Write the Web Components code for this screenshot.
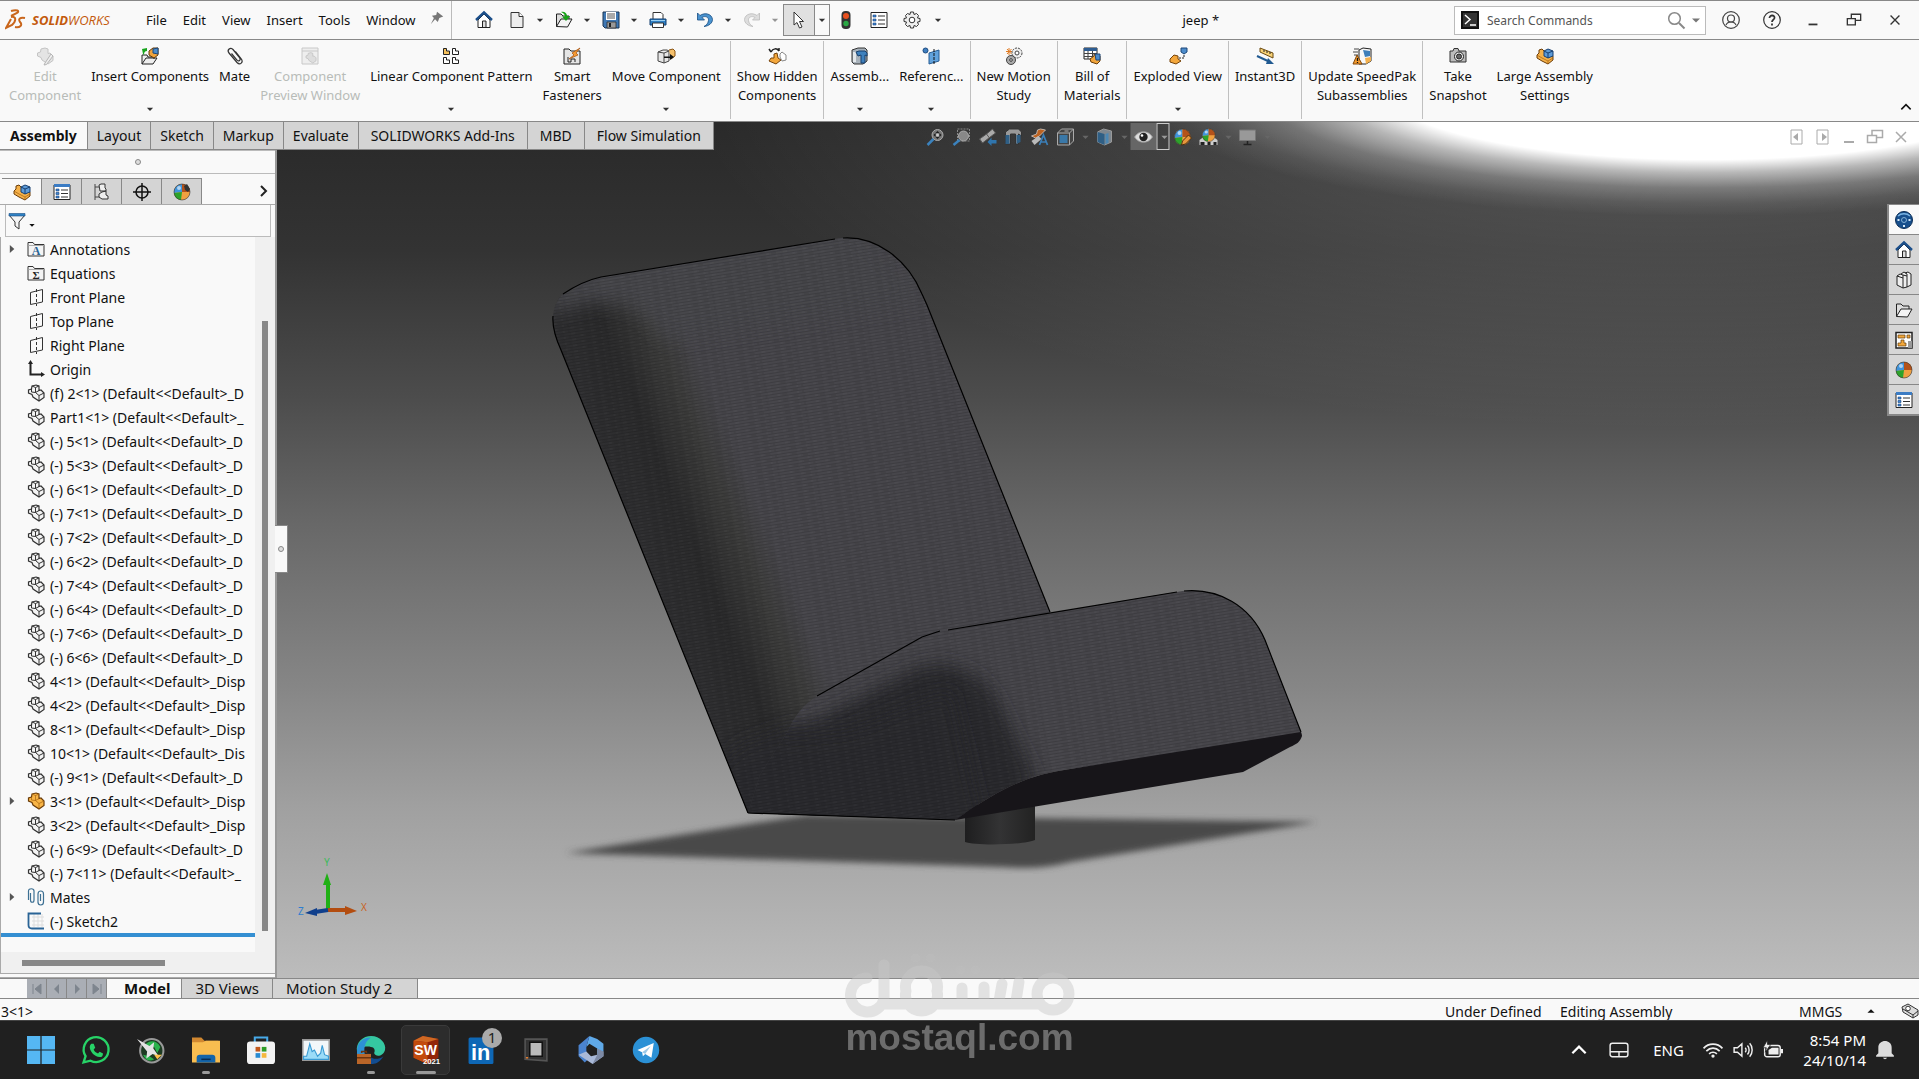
<!DOCTYPE html>
<html lang="en">
<head>
<meta charset="utf-8">
<title>jeep *</title>
<style>
  html, body { height: 100%; margin: 0; }
  body { font: 13px/19px "Noto Sans", "Open Sans", sans-serif; color: #111; overflow: hidden; }
</style>
</head>
<body>
<cad-app></cad-app>

<script>
const base = /*html*/ `
  <style>
    * { box-sizing: border-box; }
    button { margin: 0; padding: 0; border: 0; background: none; font: inherit; color: inherit; }
    :host { display: block; }
  </style>`;

// every component clones one template into an open shadow root
function define(name, markup, setup) {
    const template = document.createElement("template");
    template.innerHTML = base + markup;
    customElements.define(name, class extends HTMLElement {
        connectedCallback() {
            if (this.shadowRoot) return;
            this.attachShadow({ mode: "open" });
            this.shadowRoot.appendChild(template.content.cloneNode(true));
            if (setup) setup(this, this.shadowRoot);
        }
    });
}

const partPath = "M5 2L9 1L12 2V6.500L14 6L17 9V13.500L12 17L6 13L5 10.500L1.500 9V6L4.500 5Z";
const partLines = "M5 2L8.500 3.500L12 2M8.500 3.500V8.500L12 11.500L17 9M12 11.500V17M8.500 8.500L12 6.500M4.500 5V8L8.500 8.500";
const asm = `<path d="M1 8L3 6V3L6 2L9 5L17 9V13L12 17L6 14L1 11Z" fill="#f5b14a" stroke="#6b3c08"/><path d="M1 8L6 11L12 14L17 11M12 14V17" fill="none" stroke="#a3620f" stroke-width=".7"/><path d="M8 4L12 2L17 4V9L12 11L8 9Z" fill="#5d9bd8" stroke="#173f70"/><path d="M8 4L12 6L17 4M12 6V11" fill="none" stroke="#173f70"/>`;
const ball = `<circle cx="9" cy="9" r="8" fill="#f0a040"/><path d="M9 1A8 8 0 0 0 1 10L9 9Z" fill="#3f94dc"/><path d="M1 10A8 8 0 0 0 8 17L9 9Z" fill="#2da32b"/><path d="M9 1A8 8 0 0 1 17 9H9Z" fill="#b4521a"/><circle cx="6" cy="5" r="2" fill="#fff" opacity=".6"/><circle cx="9" cy="9" r="8" fill="none" stroke="#333" stroke-width=".6"/>`;
const list = `<path d="M1 2H17V16.500H1Z" fill="#fff" stroke="#222"/><path d="M1 1H17V4H1Z" fill="#3b7cc4"/><path d="M3 6H6V8H3ZM3 9.500H6V11.500H3ZM3 13H6V15H3Z" fill="#3f86d6" stroke="#17457c" stroke-width=".6"/><path d="M8 7H15M8 10.500H15M8 14H15" stroke="#333"/>`;
const restore = `<path d="M1.500 7.500H10.500V14.500H1.500ZM6 7V2.500H16.500V9.500H11" fill="none"/>`;
const house = `<path d="M3 9V16.500H15V9L9 3Z" fill="#fff" stroke="#222"/><path d="M7.500 16V10H11V16" fill="#ddd" stroke="#222"/><path d="M1 9L9 1.500L17 9" fill="none" stroke="#1c4f8a" stroke-width="2.400"/>`;
const folder = `<path d="M1.500 15.500V3H6L8 5H14V8" fill="#ddd" stroke="#222"/><path d="M1.500 15.500L6 8H17L12.500 16Z" fill="#f4f4f4" stroke="#222"/>`;
const treeFolder = `<path d="M1 16V2.500H6L7.500 4.500H17V16Z" fill="#f4f4f4" stroke="#333"/><path d="M1.500 5.500H17" stroke="#aaa"/>`;

const icons = {
    home: house,
    page: `<path d="M3 1.500H11L15 5.500V16.500H3Z" fill="#eee" stroke="#333"/><path d="M11 1.500V5.500H15" fill="#fff" stroke="#333"/>`,
    open: folder + `<path d="M6 1C9 0 12 2 12 5H15L11 10L7 5.500H10C10 3 8 2 6 1Z" fill="#17a317"/>`,
    save: `<path d="M1 1H17V17H3L1 15Z" fill="#3f78b4" stroke="#1b3553"/><path d="M4 1H14V9H4Z" fill="#fff"/><path d="M5 3H13M5 5H13M5 7H13" stroke="#555"/><path d="M5 11H14V17H5Z" fill="#999" stroke="#222" stroke-width=".7"/><path d="M7 12H9V16H7Z" fill="#222"/>`,
    print: `<path d="M4 8V1.500H12L14 3.500V8" fill="#fff" stroke="#333"/><path d="M1 8H17V14H1Z" fill="#2f7fc4" stroke="#123e6e"/><path d="M2 9.500H16" stroke="#9bd0f2"/><path d="M3.500 12H14.500V16.500H3.500Z" fill="#fff" stroke="#333"/>`,
    undo: `<path d="M1.500 2V9H8.500L6 6.500C9 4.500 13 6 12.500 9.500C12 12 11 14 8 15.500C13 15 16.500 12 16.500 8.500C16 3 9 1 4 4.500Z" fill="#4a93cf" stroke="#174c83" stroke-width=".8"/>`,
    redo: `<path d="M16.500 2V9H9.500L12 6.500C9 4.500 5 6 5.500 9.500C6 12 7 14 10 15.500C5 15 1.500 12 1.500 8.500C2 3 9 1 14 4.500Z" fill="#ddd" stroke="#bbb" stroke-width=".8"/>`,
    cursor: `<path d="M4 1V14L7 11.500L9.500 17L12 16L9.500 10.500H13.500Z" fill="#fff" stroke="#333"/>`,
    traffic: `<rect x="4.500" y="0" width="9" height="18" rx="4" fill="#333"/><circle cx="9" cy="5" r="3" fill="#e8501e"/><circle cx="9" cy="12.500" r="2.700" fill="#2aa844"/>`,
    list,
    options: `<path d="M1 1.500H17V16.500H1Z" fill="#fff" stroke="#222"/><path d="M3 4H6V6H3ZM3 8H6V10H3ZM3 12H6V14H3Z" fill="#3f86d6" stroke="#17457c" stroke-width=".6"/><path d="M8 5H15M8 9H15M8 13H15" stroke="#333"/>`,
    gear: `<path d="M7.500 1H10.500L11 3.500L13.500 2.500L15.500 4.500L14.500 7L17 7.500V10.500L14.500 11L15.500 13.500L13.500 15.500L11 14.500L10.500 17H7.500L7 14.500L4.500 15.500L2.500 13.500L3.500 11L1 10.500V7.500L3.500 7L2.500 4.500L4.500 2.500L7 3.500Z" fill="#eee" stroke="#333"/><circle cx="9" cy="9" r="2.800" fill="#fff" stroke="#333"/>`,
    pin: `<path d="M9 1L17 7L12 9L10 14L6.500 10.500L1 17L5 9L2.500 6L8 5Z" fill="#777"/>`,
    down: `<path d="M5 7.500H13L9 11.500Z" fill="currentColor"/>`,
    up: `<path d="M5 11H13L9 7Z" fill="currentColor"/>`,
    prompt: `<path d="M1 1H17V17H1Z" fill="#333" stroke="#111" stroke-width="2"/><path d="M4 4L9 8.500L4 13M9 14H15" fill="none" stroke="#fff" stroke-width="1.500"/>`,
    search: `<circle cx="7.500" cy="7.500" r="5.800" fill="none" stroke="#888" stroke-width="1.500"/><path d="M12 12L17.500 17.500" stroke="#888" stroke-width="2"/>`,
    user: `<g fill="none" stroke="#444" stroke-width="1.200"><circle cx="9" cy="9" r="8.300"/><circle cx="9" cy="7.500" r="3.500"/><path d="M4 14C5 11.500 7 11 9 11S13 11.500 14 14"/></g>`,
    help: `<circle cx="9" cy="9" r="8.300" fill="none" stroke="#333" stroke-width="1.200"/><path d="M6.500 7C6.500 3.500 12 3.800 11.500 7C11.300 8.500 9 9 9 11M9 12.500V14.500" fill="none" stroke="#333" stroke-width="1.800"/>`,
    min: `<path d="M4 14H14" stroke="currentColor" stroke-width="2"/>`,
    restore: `<g stroke="currentColor" stroke-width="1.500">${restore}</g>`,
    close: `<path d="M4 4L14 14M14 4L4 14" stroke="currentColor" stroke-width="1.500"/>`,
    paneleft: `<path d="M3 2H14V16H3Z" fill="none" stroke="currentColor"/><path d="M10 5V13L5 9Z" fill="currentColor"/>`,
    paneright: `<path d="M3 2H14V16H3Z" fill="none" stroke="currentColor"/><path d="M8 5V13L13 9Z" fill="currentColor"/>`,
    editpart: `<path d="${partPath}" fill="#e4e4e4" stroke="#c4c4c4"/><path d="M9 16L8 18L10.500 17.500L17 9L15 7Z" fill="#eee" stroke="#b5b5b5"/>`,
    insert: `<path d="M1 17V8H6L7 10H13V12M1 17L5 11H16L12 17Z" fill="#eee" stroke="#222"/><path d="M3 8C3 5 4 4 6 4V1L1 2L2 7" fill="#19a51f"/><path d="M8 4L12 1H17V8L13 11L8 8Z" fill="#efa33c" stroke="#603807"/><path d="M12 2L17 1V7L12 6Z" fill="#4c8ccb" stroke="#1c4779"/>`,
    clip: `<path d="M9.500 4.500L15 11.500C18 15.500 14 18.500 11 15.500L3 6C0.500 3 4.500 -0.500 7 2.500L13.500 10.500C15.500 13 12.500 15 11 13L5.500 6.500" fill="none" stroke="#333" stroke-width="1.200"/>`,
    preview: `<path d="M1 1H17V17H1Z" fill="#eee" stroke="#c8c8c8"/><path d="M1 4H17" stroke="#c8c8c8"/><g transform="translate(4 5) scale(.65)"><path d="${partPath}" fill="#ddd" stroke="#bbb"/></g>`,
    pattern: `<g fill="#fff" stroke="#222"><path d="M1.500 1.500H4.500V4H7.500V7.500H1.500Z" fill="#f5c05b"/><path d="M10.500 1.500H13.500V4H16.500V7.500H10.500ZM1.500 10.500H4.500V13H7.500V16.500H1.500ZM10.500 10.500H13.500V13H16.500V16.500H10.500Z"/></g>`,
    fastener: `<path d="M1 17V2H6L8 4H17V17Z" fill="#e5e5e5" stroke="#222"/><path d="M5 10V15H8V12H12V15" fill="none" stroke="#222"/><path d="M17 1L9 6L11 8L6 12L15 8L13 6Z" fill="#f59a32" stroke="#a04c08" stroke-width=".7"/>`,
    move: `<path d="M1 5L6 3H10L12 4V14L7 16L1 14ZM1 5L7 6L12 4M7 6V16" fill="#e6e6e6" stroke="#444"/><path d="M12 3L16 2L18 4V9L14 12" fill="#f6c06a" stroke="#8a5412"/><path d="M7 9.500H13V7L17 10L13 13V11H7Z" fill="#111"/>`,
    showhide: `<path d="M3 5C5 1 9 1 11 4M11 4V1M3 5L1 2" fill="none" stroke="#222" stroke-width="1.500"/><path d="M6 7L9 6L10 11L13 13L8 17L1 14L3 11H6Z" fill="#f3a73c" stroke="#74420a"/><path d="M12 7L14 5L18 8V13L14 14L12 10Z" fill="#fff" stroke="#888"/>`,
    assembfeat: `<path d="M1 3L7 1H14L16 3V14L12 17H3L1 15Z" fill="#a8b2bb" stroke="#333"/><path d="M2 5H5V15H2Z" fill="#e4e8eb"/><path d="M5 5L8 4H14L16 6V9L14 8V16H10V8L7 9Z" fill="#3f81bd" stroke="#173f6c"/>`,
    refgeo: `<circle cx="3.500" cy="3.500" r="2.500" fill="#3f7fc0" stroke="#1c4a80"/><path d="M7 6L17 3V14L7 17Z" fill="#61a2dc" stroke="#275d94"/><path d="M12 2V18" stroke="#111" stroke-dasharray="3 1"/>`,
    motion: `<path d="M4 1V8M1 4.500H7M2 2L6.500 7M6.500 2L2 7" stroke="#e07b22"/><circle cx="12" cy="6" r="5" fill="#eee" stroke="#444" stroke-dasharray="2 1"/><circle cx="12" cy="6" r="2" fill="#fff" stroke="#444"/><circle cx="6" cy="13" r="4.500" fill="#aaa" stroke="#444"/><circle cx="6" cy="13" r="1.300" fill="#fff" stroke="#333"/>`,
    bom: `<path d="M1 1H14V12H1Z" fill="#fff" stroke="#222"/><path d="M1 1H14V4H1Z" fill="#2e5d92"/><path d="M1 6.500H14M1 9.500H10M5 4V12M9.500 4V12" stroke="#444"/><path d="M7 12L11 9V7L17 9V14L14 17L8 15Z" fill="#f1a53c" stroke="#6a3d08"/><path d="M12 7H17V13H13Z" fill="#4c8ccb" stroke="#1c4779"/>`,
    explode: `<path d="M1 12L5 8L9 9V12L12 14L7 17L1 15Z" fill="#f3a73c" stroke="#74420a"/><path d="M12 1H18V5L15 7L12 5Z" fill="#4c8ccb" stroke="#1c4779"/><path d="M10 11H15V7" fill="none" stroke="#222" stroke-dasharray="2 1"/>`,
    instant: `<path d="M4 1L17 6V11L4 5Z" fill="#f8d276" stroke="#6b4a10"/><path d="M8 3V5M11 4V6M14 5V7" stroke="#222"/><path d="M1 9L14 15" stroke="#215a91" stroke-width="2"/><path d="M12 11L18 17L10 17Z" fill="#215a91"/>`,
    speedpak: `<path d="M6 3L10 1L18 2V14L13 17H6Z" fill="#f8f8f8" stroke="#222"/><path d="M10 3L17 4V9L12 10Z" fill="#3e7fba"/><path d="M12 11L18 10V14L13 17Z" fill="#f3b04e"/><path d="M1 2H6M0 5H5M1 8H5" stroke="#444"/><path d="M4 8L9 17H0Z" fill="#f39a2e" stroke="#824708"/><path d="M4.500 11V14M4.500 15V16" stroke="#111" stroke-width="1.300"/>`,
    camera: `<path d="M1 4H4L5 1.500H9L10 4H17V15H1Z" fill="#bbb" stroke="#333"/><circle cx="10" cy="9.500" r="4.500" fill="#eee" stroke="#222"/><circle cx="10" cy="9.500" r="2.500" fill="#666" stroke="#222"/>`,
    asm,
    propmgr: list,
    config: `<path d="M2 1V17M2 4H6M2 14H7" stroke="#444" fill="none"/><path d="M6 2L8 1H12V5L13 6V8H7ZM6 11L9 9L13 8V12L15 13V16H9L6 14Z" fill="#eee" stroke="#333"/>`,
    target: `<circle cx="9" cy="9" r="6" fill="none" stroke="#111" stroke-width="1.500"/><path d="M9 0V18M0 9H18" stroke="#111" stroke-width="1.500"/>`,
    ball,
    display: ball + `<path d="M11 3L14 1L17 6L15 9L12 7Z" fill="#333"/>`,
    next: `<path d="M6 4L11 9L6 14" fill="none" stroke="#222" stroke-width="2"/>`,
    funnel: `<path d="M1 3H17L11 10V17L7 14V10Z" fill="#f4f4f4" stroke="#333"/><path d="M1 1.500H17V4H1Z" fill="#2f82c4" stroke="#174c83" stroke-width=".6"/>`,
    annot: treeFolder + `<text x="9" y="15" text-anchor="middle" font-family="Liberation Serif" font-weight="bold" font-size="12" fill="#2a6496">A</text>`,
    equat: treeFolder + `<text x="9" y="15" text-anchor="middle" font-family="Liberation Serif" font-weight="bold" font-size="11" fill="#222">Σ</text>`,
    plane: `<path d="M3.500 4.500L15.500 1.500V14L3.500 16.500Z" fill="#fafafa" stroke="#333"/><path d="M9.500 1V18" stroke="#333" stroke-dasharray="3 2"/>`,
    origin: `<path d="M3.500 3V14.500H15" fill="none" stroke="#222" stroke-width="2"/><path d="M1 4L3.500 0L6 4ZM14 12L18 14.500L14 17Z" fill="#222"/>`,
    part: `<path d="${partPath}" fill="#f4f4f4" stroke="#333" stroke-width="1.200"/><path d="${partLines}" fill="none" stroke="#333"/>`,
    hotpart: `<path d="${partPath}" fill="#f9b546" stroke="#6b3c08" stroke-width="1.200"/><path d="${partLines}" fill="none" stroke="#a3620f" stroke-width=".7"/>`,
    mates: `<g fill="none" stroke="#3d7093" stroke-width="1.200"><path d="M1.500 12V3C1.500 0 7 0 7 3V12C7 15 3.500 15 3.500 12V5"/><path d="M11 15V6C11 2 16.500 2 16.500 6V14C16.500 18 11 18 11 14M13.500 6V13"/></g>`,
    sketch: `<path d="M5 5H17M5 9H17M5 13H17M7 2V15M11 2V15M15 2V15" stroke="#ddd"/><path d="M14 1.500H1.500V13C1.500 15.500 3 16.500 5 16.500H17" fill="none" stroke="#2a6496" stroke-width="1.800"/>`,
    zoomfit: `<circle cx="11" cy="7" r="5.500" fill="#777" stroke="#aaa"/><path d="M11 3L13 5H9ZM11 11L9 9H13ZM7 7L9 5V9ZM15 7L13 9V5Z" fill="#1c1c1c"/><circle cx="11" cy="7" r="1.500" fill="#ccc"/><path d="M7 11L1 17" stroke="#3b82bd" stroke-width="2.500"/>`,
    zoomarea: `<path d="M5 1H17V13H5Z" fill="none" stroke="#888" stroke-dasharray="2 1"/><circle cx="11" cy="8" r="5" fill="#888" stroke="#aaa"/><path d="M7 12L1 17" stroke="#3b82bd" stroke-width="2.500"/>`,
    prev: `<path d="M1 11L8 6L14 1L17 5L13 8L4 15Z" fill="#aaa" stroke="#555"/><path d="M1 11L4 15M8 6L11 10" stroke="#555"/><path d="M9 14L13 9.500V12H18V15.500H13V18Z" fill="#2f75ad"/>`,
    section: `<path d="M1 4L5 1H14L17 4V8L14 6V16H11V6H6V16H1Z" fill="#999" stroke="#333"/><path d="M1 7H5V16H1ZM12 7H16V14L12 16Z" fill="#2f5f85"/>`,
    dynamic: `<path d="M1 8L6 6L7 2L10 1L15 2L9 8L5 10Z" fill="#bd6322" stroke="#ddd" stroke-width=".7"/><path d="M1 13L8 8L11 11L4 17Z" fill="#bbb"/><path d="M9 17L13 7L17 17M10.500 14H15.500" fill="none" stroke="#3b7fb8" stroke-width="1.700"/>`,
    cube: `<path d="M1 5L5 1H17V13L13 17H1Z" fill="#444" stroke="#aaa"/><path d="M3 7H11V15H3Z" fill="#3a78a8"/><path d="M1 5H13V17M13 5L17 1M8 3H12" fill="none" stroke="#aaa"/>`,
    shade: `<path d="M2 4L8 1L16 3V14L9 17L2 14Z" fill="#7d868e" stroke="#999"/><path d="M2 4L9 6V17L2 14Z" fill="#2f5f85"/><path d="M10 6L13 5V15L10 16Z" fill="#4b87b4"/>`,
    eye: `<path d="M0 9C4 2 14 2 18 9C14 16 4 16 0 9Z" fill="#ddd" stroke="#999"/><circle cx="9" cy="9" r="4.200" fill="#222"/><circle cx="7.500" cy="7.500" r="1.300" fill="#fff"/>`,
    paint: ball + `<path d="M8 17L9 13L15 7L18 10L12 16Z" fill="#e6963d" stroke="#4d3010"/>`,
    scene: `<path d="M0 12L4 9H14L18 12V17H0Z" fill="#ccc"/><path d="M1 14H5V17H1ZM8 14H11V17H8ZM14 14H17V17H14Z" fill="#222"/><g transform="translate(2 0) scale(.8)">${ball}</g>`,
    monitor: `<path d="M1 2H17V12.500H1Z" fill="#999" stroke="#777"/><path d="M9 13V16M5 16.500H13" stroke="#222" stroke-width="1.500"/>`,
    globe: `<circle cx="9" cy="9" r="8.500" fill="#174f8d" stroke="#0c2d55"/><path d="M3 5C6 2 12 2 15 5" fill="none" stroke="#7ab4e4" stroke-width="1.500"/><circle cx="9" cy="9" r="2.500" fill="none" stroke="#9cc8ea" stroke-width=".8"/><path d="M2.500 9H4.500M13.500 9H15.500M8 15H10" stroke="#d6e8f6" stroke-width="2"/>`,
    books: `<path d="M2 5L5 3L8 4V17L2 14ZM6 3L9 1L12 3V16L8 17M10 2L13 1L16 3V14L12 16" fill="#eee" stroke="#222"/><path d="M2 5L8 7M8 4L12 5" stroke="#222"/>`,
    folder,
    palette: `<path d="M1 1.500H17V17H1Z" fill="#fff" stroke="#222" stroke-width="1.500"/><path d="M3 4H10V7H3ZM12 4H15V7H12ZM6 9H9V12H11V15H3V12H6Z" fill="#f2a73b" stroke="#623d0b" stroke-width=".7"/><path d="M13 10H17V17H13Z" fill="#999"/>`,
    tag: `<path d="M1 5L7 2L17 8V13L12 16L2 10Z" fill="#ddd" stroke="#333"/><circle cx="7" cy="6.500" r="2.300" fill="#fff" stroke="#333"/><path d="M2 7L12 13L17 9M12 13V16" fill="none" stroke="#333"/>`,
    win: `<path d="M0 0H8.600V8.600H0ZM9.400 0H18V8.600H9.400ZM0 9.400H8.600V18H0ZM9.400 9.400H18V18H9.400Z" fill="#55b7f3"/>`,
    whatsapp: `<path d="M1 17L2.300 13A8 8 0 1 1 5.500 15.900Z" fill="none" stroke="#27d367" stroke-width="1.500"/><path d="M6 5L7.500 5L8.500 7.500L7.500 8.700C8 10 9 10.800 10.300 11.300L11.300 10.200L13.500 11.200C13.500 13 12.500 13.700 11.300 13.500C8 13 5.500 10.500 5 7.500C5 6.300 5.300 5.500 6 5Z" fill="#27d367"/>`,
    rocket: `<circle cx="9.500" cy="9.500" r="7.500" fill="#1d3b22" stroke="#999" stroke-width="1.300"/><path d="M5 6C8 2 13 3 15 7L13 11L11 7ZM4 12L8 13L11 15C8 17 5 15 4 12Z" fill="#2bb24c"/><path d="M0 2L8 6.500L11 4L10.500 8L14 13L10 11.500L6 14.500L6.500 10Z" fill="#e4e4e4"/><path d="M11 12L16 12L13 15Z" fill="#ffc04a"/>`,
    files: `<path d="M0 1H6L8 3H17V8H0Z" fill="#d18830"/><path d="M0 4H7L9 3H18V17H0Z" fill="#f8bd50"/><path d="M3 17V14Q3 12 5 12H13Q15 12 15 14V17Z" fill="#1465aa"/><path d="M6 15H12" stroke="#082d55"/>`,
    store: `<path d="M5 4V1H13V4" fill="none" stroke="#47a9e8" stroke-width="1.300"/><rect y="3.500" width="18" height="14.500" rx="2" fill="#f3f3f3"/><path d="M5.500 7H8.500V10H5.500Z" fill="#c3581b"/><path d="M9.500 7H12.500V10H9.500Z" fill="#2d9c28"/><path d="M5.500 11H8.500V14H5.500Z" fill="#288bd2"/><path d="M9.500 11H12.500V14H9.500Z" fill="#f5b73d"/>`,
    perf: `<path d="M.5 2.500H17.500V15.500H.5Z" fill="#f2f7fa" stroke="#999"/><path d="M1 15V13L3 13L5 5L6.500 10L8 9L10 13L12 11L13 6L14.500 12L17 13V15Z" fill="#9cdcf8" stroke="#3a9bd4" stroke-width=".7"/>`,
    edge: `<path d="M0 10C-1 4 4 0 9 0C15 0 19 5 18 9C17 13 12 14 11 11C12 9 11 7 9 7C5 6 1 8 0 10Z" fill="#35c7a1"/><path d="M0 10C0 4 4 1 9 1C6 3 4 6 5 12L0 12Z" fill="#2d91d5"/><path d="M7 10C7 15 13 16 17 13C14 18 10 19 7 17Z" fill="#124c90"/><path d="M0 11.500H9V18H0Z" fill="#b96528"/><path d="M0 14H9M3 11V10H6V11" stroke="#6c330d" fill="none"/>`,
    sw: `<path d="M1 3L7 0L17 2V14L10 18L1 14Z" fill="#932608"/><path d="M1 3L7 0L17 2L10 4Z" fill="#cf6823"/><path d="M1 3L10 4V18L1 14Z" fill="#c34b0c"/><g fill="#fff" font-family="Liberation Sans" font-weight="bold"><text x="1.500" y="12.500" font-size="9">SW</text><text x="7" y="18" font-size="5">2021</text></g>`,
    linkedin: `<rect x="1" y="1" width="16" height="17" rx="1" fill="#0e67b5"/><text x="2.500" y="15.500" font-family="Liberation Sans" font-weight="bold" font-size="14" fill="#fff">in</text>`,
    chip: `<path d="M2 2L16 2V16L2 15Z" fill="#333" stroke="#555"/><path d="M5 4H13V13H5Z" fill="#bbb" stroke="#111"/><path d="M2.500 14H4" stroke="#e07c30"/>`,
    hexring: `<path d="M8 0L13 2L17 5V10L13 12V8L8 5L6 7Z" fill="#5fa9e8"/><path d="M8 0L6 7V12L9 13L5 17L1 13V6Z" fill="#4a83cf"/><path d="M1 12L6 10L9 13L13 12L17 10V13L10 18Z" fill="#a9b9d8"/><path d="M17 10L13 8V12L10 18L17 13Z" fill="#7d8aa5"/>`,
    telegram: `<circle cx="9" cy="9" r="8.500" fill="#2b91d6"/><path d="M3.500 9L14 4.500L12.500 14L8.500 11.500L7 13L6.500 10.500Z" fill="#fff"/><path d="M6.500 10.500L12 6.500L8.500 11.500Z" fill="#9bc9e8"/>`,
    chevup: `<path d="M3 12L9 6L15 12" fill="none" stroke="currentColor" stroke-width="2"/>`,
    touchpad: `<rect x="1" y="3" width="16" height="12" rx="2" fill="none" stroke="#eee" stroke-width="1.300"/><path d="M1 10.500H17M9 10.500V15" stroke="#eee" stroke-width="1.300"/>`,
    wifi: `<g fill="none" stroke="#eee" stroke-width="1.500"><path d="M.5 7.500C5 2.500 13 2.500 17.500 7.500M3 10C6.500 6.500 11.500 6.500 15 10M5.500 12.500C7.500 10.500 10.500 10.500 12.500 12.500"/></g><circle cx="9" cy="14.500" r="1.500" fill="#eee"/>`,
    volume: `<g fill="none" stroke="#eee" stroke-width="1.300"><path d="M1 7H4L8 3.500V14.500L4 11H1ZM11 7C12 8 12 10 11 11M13 5C15 7 15 11 13 13M15 3C18 6 18 12 15 15"/></g>`,
    battery: `<rect x="1.500" y="5" width="14" height="10" rx="2" fill="none" stroke="#eee" stroke-width="1.300"/><path d="M5 13V9L8 7H14V13ZM16 8H18V12H16Z" fill="#eee"/><path d="M4 0L0 7H3L2 11L7 4H4Z" fill="#eee" stroke="#202020" stroke-width=".7"/>`,
    bell: `<path d="M3 12V7C3 -1 15 -1 15 7V12L17 14V15H1V14ZM7 16H11Q9 18.500 7 16Z" fill="#ddd"/>`
};

define("cad-icon", /*html*/ `
  <style>
    :host { display: inline-flex; flex: none; width: 18px; height: 18px; }
    svg { width: 100%; height: 100%; overflow: visible; }
  </style>
  <svg viewBox="0 0 18 18" aria-hidden="true"></svg>`,
(host, root) => {
    root.querySelector("svg").innerHTML = icons[host.getAttribute("name")] || "";
});

define("title-bar", /*html*/ `
  <style>
    :host { display: flex; align-items: center; height: 40px; background: #f9f9f9; border-top: 1px solid #888; border-bottom: 1px solid #888; }
    .brand { display: flex; align-items: center; gap: 6px; width: 138px; padding-left: 5px; color: #c35a0c; font-style: italic; white-space: nowrap; }
    .brand svg { width: 21px; height: 24px; }
    .brand span { font-family: "Open Sans", sans-serif; }
    nav, .quick, .window { display: flex; align-items: center; height: 100%; }
    nav button { padding: 0 8px; }
    .pin { width: 28px; height: 100%; padding: 0; border-right: 1px solid #bbb; margin-right: 18px; }
    .pin cad-icon { width: 14px; height: 14px; }
    .quick > button { width: 28px; height: 30px; display: grid; place-items: center; }
    .quick > .arrow { width: 19px; color: #333; }
    .quick > .home { margin-right: 5px; }
    .quick > .select { width: 32px; height: 32px; margin-left: -2px; background: #e0e0e0; border: 1px solid #888; }
    .quick > .select + .arrow { width: 15px; height: 32px; border: 1px solid #888; border-left: 0; }
    .quick > .wide { width: 33px; }
    .off { opacity: .5; }
    .arrow cad-icon { width: 14px; height: 14px; }
    h1 { flex: 1; margin: 0; text-align: center; font: inherit; }
    form { display: flex; align-items: center; gap: 8px; width: 252px; height: 29px; margin-right: 4px; padding: 0 0 0 6px; background: #fff; border: 1px solid #bbb; }
    input { flex: 1; min-width: 0; border: 0; padding: 0; outline: 0; background: none; font: inherit; font-size: 12px; }
    input::placeholder { color: #555; opacity: 1; }
    form cad-icon:last-child { margin-left: -6px; color: #777; }
    .window { padding-right: 4px; color: #333; }
    .window button { width: 41px; height: 30px; display: grid; place-items: center; }
    .window .small cad-icon { width: 16px; height: 16px; }
  </style>
  <div class="brand">
    <svg viewBox="0 0 21 24" fill="none" stroke="#c9661c" stroke-width="2"><path d="M6 3C12 1 15 3 12 5L6 8M6 9C12 8 11 13 7 17L1 20L6 11M20 10C15 9 13 11 15 14C18 17 15 20 10 19"/></svg>
    <span><b>SOLID</b>WORKS</span>
  </div>
  <nav>
    <button>File</button><button>Edit</button><button>View</button><button>Insert</button><button>Tools</button><button>Window</button>
    <button class="pin" aria-label="Pin"><cad-icon name="pin"></cad-icon></button>
  </nav>
  <div class="quick"></div>
  <h1>jeep *</h1>
  <form>
    <cad-icon name="prompt"></cad-icon>
    <input type="search" placeholder="Search Commands" aria-label="Search Commands">
    <cad-icon name="search"></cad-icon>
    <cad-icon name="down"></cad-icon>
  </form>
  <div class="window">
    <button aria-label="Account"><cad-icon name="user"></cad-icon></button>
    <button aria-label="Help"><cad-icon name="help"></cad-icon></button>
    <button class="small" aria-label="Minimize"><cad-icon name="min"></cad-icon></button>
    <button class="small" aria-label="Restore"><cad-icon name="restore"></cad-icon></button>
    <button class="small" aria-label="Close"><cad-icon name="close"></cad-icon></button>
  </div>`,
(host, root) => {
    const items = [["home", "home"], ["page"], ["down", "arrow"], ["open"], ["down", "arrow"], ["save"], ["down", "arrow"],
        ["print"], ["down", "arrow"], ["undo"], ["down", "arrow"], ["redo"], ["down", "arrow off"],
        ["cursor", "select"], ["down", "arrow"], ["traffic", "wide"], ["options", "wide"], ["gear", "wide"], ["down", "arrow"]];
    root.querySelector(".quick").innerHTML = items.map(([icon, cls = ""]) =>
        `<button class="${cls}" aria-label="${icon}"><cad-icon name="${icon}"></cad-icon></button>`).join("");
});

define("ribbon-button", /*html*/ `
  <style>
    :host { display: block; }
    :host([disabled]) { color: #b8bcb8; }
    button { display: flex; flex-direction: column; align-items: center; height: 76px; padding: 6px 5px 0; white-space: nowrap; text-align: center; }
    .label { flex: 1; margin-top: 2px; }
    .arrow { width: 14px; height: 14px; margin-bottom: 1px; color: #333; }
  </style>
  <button><cad-icon class="pic"></cad-icon><span class="label"><slot></slot></span></button>`,
(host, root) => {
    const button = root.querySelector("button");
    const pic = document.createElement("cad-icon");
    pic.setAttribute("name", host.getAttribute("icon"));
    root.querySelector(".pic").replaceWith(pic);
    button.disabled = host.hasAttribute("disabled");
    if (host.hasAttribute("menu")) {
        button.insertAdjacentHTML("beforeend", `<cad-icon class="arrow" name="down"></cad-icon>`);
    }
});

define("command-ribbon", /*html*/ `
  <style>
    :host { display: flex; height: 82px; background: #f9f9f9; border-bottom: 1px solid #888; }
    div { display: flex; height: 78px; margin-top: 1px; padding: 0 1px; border-right: 1px solid #c0c0c0; }
    div:first-of-type { padding: 0 4px; }
    div:last-of-type { border: 0; }
    .fold { align-self: flex-end; margin: 0 6px 2px auto; }
    .fold cad-icon { width: 14px; height: 14px; }
  </style>
  <div>
    <ribbon-button icon="editpart" disabled>Edit<br>Component</ribbon-button>
    <ribbon-button icon="insert" menu>Insert Components</ribbon-button>
    <ribbon-button icon="clip">Mate</ribbon-button>
    <ribbon-button icon="preview" disabled>Component<br>Preview Window</ribbon-button>
    <ribbon-button icon="pattern" menu>Linear Component Pattern</ribbon-button>
    <ribbon-button icon="fastener">Smart<br>Fasteners</ribbon-button>
    <ribbon-button icon="move" menu>Move Component</ribbon-button>
  </div>
  <div><ribbon-button icon="showhide">Show Hidden<br>Components</ribbon-button></div>
  <div>
    <ribbon-button icon="assembfeat" menu>Assemb...</ribbon-button>
    <ribbon-button icon="refgeo" menu>Referenc...</ribbon-button>
  </div>
  <div><ribbon-button icon="motion">New Motion<br>Study</ribbon-button></div>
  <div><ribbon-button icon="bom">Bill of<br>Materials</ribbon-button></div>
  <div><ribbon-button icon="explode" menu>Exploded View</ribbon-button></div>
  <div><ribbon-button icon="instant">Instant3D</ribbon-button></div>
  <div><ribbon-button icon="speedpak">Update SpeedPak<br>Subassemblies</ribbon-button></div>
  <div>
    <ribbon-button icon="camera">Take<br>Snapshot</ribbon-button>
    <ribbon-button icon="asm">Large Assembly<br>Settings</ribbon-button>
  </div>
  <button class="fold" aria-label="Collapse"><cad-icon name="chevup"></cad-icon></button>`);

define("command-tabs", /*html*/ `
  <style>
    :host { display: flex; width: max-content; height: 28px; font-size: 14px; background: #f9f9f9; border-bottom: 1px solid #888; }
    button { height: 27px; padding: 0 9px; background: #d4d4d4; border-right: 1px solid #888; }
    button:first-of-type { padding: 0 10px; font-weight: bold; background: #f9f9f9; }
    .wide { padding: 0 12px; }
  </style>
  <button>Assembly</button><button>Layout</button><button>Sketch</button><button>Markup</button><button>Evaluate</button><button class="wide">SOLIDWORKS Add-Ins</button><button class="wide">MBD</button><button class="wide">Flow Simulation</button>`);

define("tree-row", /*html*/ `
  <style>
    :host { display: flex; align-items: center; height: 24px; padding-left: 7px; font-size: 14px; white-space: nowrap; }
    .twist { width: 9px; height: 8px; margin-right: 10px; }
    :host([open]) .twist { background: #555; clip-path: polygon(20% 0, 70% 50%, 20% 100%); }
    slot[name] { display: flex; margin-right: 5px; }
  </style>
  <span class="twist"></span><slot name="icon"></slot><slot></slot>`);

define("feature-tree", /*html*/ `
  <style>
    :host { display: flex; flex-direction: column; width: 277px; background: #f9f9f9; border-right: 2px solid #999; position: relative; }
    .grip { height: 24px; border-top: 1px solid #bbb; border-bottom: 1px solid #bbb; display: grid; place-items: center; }
    .dot { width: 6px; height: 6px; border: 1px solid #888; border-radius: 50%; background: #ddd; }
    .tabs { display: flex; height: 31px; padding: 4px 0 0 2px; border-bottom: 1px solid #aaa; }
    .tabs button { width: 40px; display: grid; place-items: center; background: #d4d4d4; border-top: 1px solid #888; border-right: 1px solid #888; }
    .tabs button:first-child { background: #f9f9f9; }
    .tabs button:last-child { margin-left: auto; width: 22px; background: none; border: 0; }
    .filter { display: flex; align-items: center; height: 32px; margin: 0 4px 0 5px; padding-left: 2px; border: 1px solid #bbb; border-top: 0; }
    .filter cad-icon:last-child { width: 12px; height: 12px; margin-top: 8px; }
    .body { flex: 1; display: flex; min-height: 0; border-left: 1px solid #aaa; }
    .rows { flex: 1; min-width: 0; overflow: hidden; }
    .bar { height: 4px; background: #348fd2; }
    .scroll { width: 20px; background: #f0f0f0; display: flex; justify-content: center; }
    .scroll i { width: 6px; margin: 84px 0 21px; background: #888; }
    .hscroll { height: 21px; padding: 8px 21px; background: #f0f0f0; border-left: 1px solid #aaa; }
    .hscroll i { display: block; width: 143px; height: 6px; background: #888; }
    .end { height: 5px; border-top: 1px solid #aaa; border-bottom: 1px solid #aaa; }
    .handle { position: absolute; z-index: 1; right: -13px; top: 375px; width: 13px; height: 48px; display: grid; place-items: center; background: #f9f9f9; border: 1px solid #888; border-left: 0; }
  </style>
  <div class="grip"><span class="dot"></span></div>
  <div class="tabs">
    <button aria-label="Features"><cad-icon name="asm"></cad-icon></button>
    <button aria-label="Properties"><cad-icon name="propmgr"></cad-icon></button>
    <button aria-label="Configurations"><cad-icon name="config"></cad-icon></button>
    <button aria-label="Dimensions"><cad-icon name="target"></cad-icon></button>
    <button aria-label="Appearances"><cad-icon name="display"></cad-icon></button>
    <button aria-label="More"><cad-icon name="next"></cad-icon></button>
  </div>
  <div class="filter"><cad-icon name="funnel"></cad-icon><cad-icon name="down"></cad-icon></div>
  <div class="body"><div class="rows"></div><div class="scroll"><i></i></div></div>
  <div class="hscroll"><i></i></div>
  <div class="end"></div>
  <button class="handle" aria-label="Hide panel"><span class="dot"></span></button>`,
(host, root) => {
    const D = " (Default<<Default>_";
    const rows = [
        ["annot", "Annotations", 1], ["equat", "Equations"], ["plane", "Front Plane"], ["plane", "Top Plane"],
        ["plane", "Right Plane"], ["origin", "Origin"], ["part", "(f) 2<1>" + D + "D"], ["part", "Part1<1>" + D],
        ...["5<1>", "5<3>", "6<1>", "7<1>", "7<2>", "6<2>", "7<4>", "6<4>", "7<6>", "6<6>"].map(n => ["part", "(-) " + n + D + "D"]),
        ["part", "4<1>" + D + "Disp"], ["part", "4<2>" + D + "Disp"], ["part", "8<1>" + D + "Disp"], ["part", "10<1>" + D + "Dis"],
        ["part", "(-) 9<1>" + D + "D"], ["hotpart", "3<1>" + D + "Disp", 1], ["part", "3<2>" + D + "Disp"],
        ["part", "(-) 6<9>" + D + "D"], ["part", "(-) 7<11>" + D], ["mates", "Mates", 1], ["sketch", "(-) Sketch2"]
    ];
    const box = root.querySelector(".rows");
    for (const [icon, text, open] of rows) {
        const row = document.createElement("tree-row");
        row.toggleAttribute("open", !!open);
        row.innerHTML = `<cad-icon slot="icon" name="${icon}"></cad-icon>`;
        row.append(text);
        box.append(row);
    }
    box.insertAdjacentHTML("beforeend", `<div class="bar"></div>`);
});

define("view-toolbar", /*html*/ `
  <style>
    :host { display: flex; height: 27px; color: #666; }
    button { width: 26px; display: grid; place-items: center; }
    .arrow { width: 13px; }
    .arrow cad-icon { width: 14px; height: 14px; }
    .on { background: #666; }
    .on + .arrow { border: 1px solid #ccc; color: #999; }
  </style>`,
(host, root) => {
    for (const name of ["zoomfit", "zoomarea", "prev", "section", "dynamic", "cube", "down", "shade", "down", "eye", "down", "paint", "scene", "down", "monitor", "down"]) {
        const cls = name === "down" ? "arrow" : name === "eye" ? "on" : "";
        root.append(document.createRange().createContextualFragment(
            `<button class="${cls}" aria-label="${name}"><cad-icon name="${name}"></cad-icon></button>`));
    }
});

define("model-view", /*html*/ `
  <style>
    :host {
      position: relative; flex: 1; min-width: 0; overflow: hidden;
      background:
        radial-gradient(ellipse 35% 15% at 87% -4%, #fff 0 56%, rgba(255,255,255,.6) 66%, rgba(255,255,255,.25) 78%, rgba(255,255,255,.08) 90%, transparent),
        radial-gradient(ellipse 60% 40% at 85% -4%, rgba(255,255,255,.22), transparent),
        linear-gradient(#292929, #333 15%, #4c4c4c 32%, #686868 47%, #868686 66%, #a0a0a0 80%, #bcbcbc);
    }
    svg.model { position: absolute; inset: 0; width: 100%; height: 100%; }
    view-toolbar { position: absolute; top: 1px; left: 50%; transform: translateX(-50%); }
    .doc { position: absolute; top: 6px; right: 9px; display: flex; gap: 8px; color: #aaa; }
    .pane { position: absolute; right: 0; top: 82px; border: 2px solid #888; border-width: 1px 0 1px 2px; }
    .pane button { display: grid; place-items: center; width: 30px; height: 30px; background: #d6d6d6; border-bottom: 1px solid #888; }
    .pane button:first-child { background: #f9f9f9; }
  </style>
  <svg class="model" viewBox="277 122 1642 856" preserveAspectRatio="xMidYMid slice">
    <defs>
      <linearGradient id="back" gradientUnits="userSpaceOnUse" x1="561" y1="350" x2="676" y2="303">
        <stop offset="0" stop-color="#2f2f31"/><stop offset=".4" stop-color="#2b2b2c"/><stop offset=".76" stop-color="#3d3d3c"/><stop offset="1" stop-color="#47464b"/>
      </linearGradient>
      <linearGradient id="post"><stop offset="0" stop-color="#1e1e1f"/><stop offset=".5" stop-color="#333334"/><stop offset="1" stop-color="#222"/></linearGradient>
      <pattern id="weave" width="37" height="6" patternUnits="userSpaceOnUse" patternTransform="rotate(-9)">
        <path d="M0 .5H37M0 3.500H37" stroke="#000" stroke-opacity=".14"/><path d="M3 2H6M14 5H17M23 2H25M31 5H35" stroke="#fff" stroke-opacity=".04"/><path d="M8 2H13M19 5H24M28 2H30" stroke="#000" stroke-opacity=".12"/>
      </pattern>
      <filter id="soft" x="-20%" y="-20%" width="140%" height="140%"><feGaussianBlur stdDeviation="9"/></filter>
      <filter id="edge"><feGaussianBlur stdDeviation="3"/></filter>
      <clipPath id="backclip"><path d="M748 813L561 350C556 339 552 328 553 316C554 306 558 298 563 294C575 286 587 280 601 277L835 239C870 233 905 256 922 294L927 305L1050 612L1050 700L955 820Z"/></clipPath>
      <clipPath id="seatclip"><path d="M748 813L760 775L788 731C795 715 803 705 817 696L922 637L940 631L1177 592C1215 585 1250 605 1265 640L1301 732L1302 736L1070 769C1030 775 1005 785 955 820Z"/></clipPath>
    </defs>
    <path d="M566 853L807 815L1317 822L1070 862C1052 867 1030 869 1000 867Z" fill="#4a4a4a" filter="url(#edge)"/>
    <path d="M965 805H1035V840C1025 845 975 846 965 842Z" fill="url(#post)"/>
    <g clip-path="url(#backclip)">
      <path d="M540 220H1080V830H540Z" fill="url(#back)"/>
      <path d="M535 300L595 265L850 225L930 300L665 340C645 305 610 290 555 312Z" fill="#47464b" filter="url(#soft)"/>
      <path d="M650 830L740 745L800 722L850 850Z" fill="#2b2b2d" filter="url(#soft)"/>
    </g>
    <g clip-path="url(#seatclip)">
      <path d="M740 580H1310V830H740Z" fill="#47464b"/>
      <path d="M690 700L780 725L812 722L915 668C945 655 985 672 1000 705L1035 775L1010 870H690Z" fill="#2b2b2d" filter="url(#soft)"/>
      <path d="M690 700L790 735L850 730L950 690L990 850H690Z" fill="#2b2b2d" filter="url(#soft)"/>
    </g>
    <path d="M748 813L561 350C550 325 551 303 563 294L601 277L835 239C870 233 905 256 922 294L1050 612L1177 592C1215 585 1250 605 1265 640L1301 732L1302 736L1070 769L955 820Z" fill="url(#weave)"/>
    <path d="M955 820C1005 785 1030 775 1070 769L1301 732L1302 736C1300 742 1297 744 1290 747L1243 772Z" fill="#171519"/>
    <g fill="none" stroke="#000" stroke-width="1.200">
      <path d="M748 813L561 350C556 339 552 328 553 316M563 294C575 286 587 280 601 277L835 239M843 238C875 236 907 258 922 294L927 305L1050 612"/>
      <path d="M817 696L922 637L940 631M948 630L1177 592M1184 591C1218 588 1250 605 1265 640L1301 732M748 813L955 820"/>
    </g>
    <g stroke-width="4">
      <path d="M328 910V883" stroke="#1fb014"/><path d="M323 885L327 873L331 885Z" fill="#1fb014"/>
      <path d="M328 910H346" stroke="#b34d10"/><path d="M345 906L357 911L345 915Z" fill="#b34d10"/>
      <path d="M328 910L315 912" stroke="#103f8c"/><path d="M317 908L305 913L317 916Z" fill="#103f8c"/>
    </g>
    <g font-family="Noto Sans" font-size="10"><text x="324" y="866" fill="#3dba5c">Y</text><text x="361" y="911" fill="#c8641f">X</text><text x="298" y="915" fill="#2f7ecf">Z</text></g>
  </svg>
  <view-toolbar></view-toolbar>
  <div class="doc">
    <cad-icon name="paneleft"></cad-icon><cad-icon name="paneright"></cad-icon><cad-icon name="min"></cad-icon><cad-icon name="restore"></cad-icon><cad-icon name="close"></cad-icon>
  </div>
  <div class="pane">
    <button aria-label="3DEXPERIENCE"><cad-icon name="globe"></cad-icon></button>
    <button aria-label="Resources"><cad-icon name="home"></cad-icon></button>
    <button aria-label="Library"><cad-icon name="books"></cad-icon></button>
    <button aria-label="Explorer"><cad-icon name="folder"></cad-icon></button>
    <button aria-label="Palette"><cad-icon name="palette"></cad-icon></button>
    <button aria-label="Appearances"><cad-icon name="ball"></cad-icon></button>
    <button aria-label="Properties"><cad-icon name="list"></cad-icon></button>
  </div>`);

define("study-tabs", /*html*/ `
  <style>
    :host { display: flex; height: 21px; padding-left: 27px; font-size: 15px; background: #f9f9f9; border-top: 1px solid #888; border-bottom: 1px solid #888; }
    button { padding: 0 13px; border-right: 1px solid #888; background: #d4d4d4; }
    .nav { width: 20px; padding: 0; color: #7e858e; background: #aaaeb5; display: grid; place-items: center; }
    .nav svg { width: 12px; height: 12px; }
    .model { padding: 0 11px 0 17px; font-weight: bold; background: #f9f9f9; }
    .last { padding-right: 25px; }
  </style>
  <button class="nav" aria-label="First"><svg viewBox="0 0 12 12"><path d="M2 1V11M10 1V11L4 6Z" fill="currentColor" stroke="currentColor"/></svg></button>
  <button class="nav" aria-label="Previous"><svg viewBox="0 0 12 12"><path d="M8 1V11L3 6Z" fill="currentColor"/></svg></button>
  <button class="nav" aria-label="Next"><svg viewBox="0 0 12 12"><path d="M4 1V11L9 6Z" fill="currentColor"/></svg></button>
  <button class="nav" aria-label="Last"><svg viewBox="0 0 12 12"><path d="M10 1V11M2 1V11L8 6Z" fill="currentColor" stroke="currentColor"/></svg></button>
  <button class="model">Model</button><button>3D Views</button><button class="last">Motion Study 2</button>`);

define("status-bar", /*html*/ `
  <style>
    :host { display: flex; align-items: center; height: 21px; padding-top: 3px; font-size: 14px; background: #f9f9f9; white-space: nowrap; }
    .sel { flex: 1; padding-left: 1px; }
    .state { width: 115px; }
    .mode { width: 239px; }
    .unit { width: 64px; }
    .arrow { width: 16px; height: 16px; margin-right: 22px; }
  </style>
  <span class="sel">3&lt;1&gt;</span><span class="state">Under Defined</span><span class="mode">Editing Assembly</span><span class="unit">MMGS</span>
  <cad-icon class="arrow" name="up"></cad-icon><cad-icon name="tag"></cad-icon>`);

define("task-bar", /*html*/ `
  <style>
    :host { display: flex; align-items: center; height: 59px; padding: 0 22px 0 13px; color: #fff; font-size: 15px; background: #202020; border-top: 1px solid #444; }
    .apps { display: flex; flex: 1; }
    .apps button { position: relative; width: 55px; height: 50px; display: grid; place-items: center; }
    .apps cad-icon { width: 28px; height: 28px; }
    .run::after { content: ""; position: absolute; bottom: 1px; width: 8px; height: 3px; border-radius: 2px; background: #999; }
    .active::before { content: ""; position: absolute; inset: 0 3px; border: 1px solid #3a3a3a; border-radius: 5px; background: #2c2c2c; }
    .active cad-icon { position: relative; }
    .active::after { width: 20px; }
    b { position: absolute; right: 6px; top: 3px; width: 20px; height: 20px; border-radius: 50%; background: #aaa; color: #222; font-weight: normal; }
    .tray { display: flex; align-items: center; }
    .tray button { width: 30px; display: grid; place-items: center; }
    .tray .wide { width: 40px; }
    .tray .lang { width: 59px; }
    .tray .clock { display: block; width: 78px; margin-right: 7px; text-align: right; line-height: 20px; }
    .tray .bell { width: 24px; }
    .tray cad-icon { width: 20px; height: 20px; }
  </style>
  <div class="apps"></div>
  <div class="tray">
    <button class="wide" aria-label="Hidden icons"><cad-icon name="chevup"></cad-icon></button>
    <button class="wide" aria-label="Touchpad"><cad-icon name="touchpad"></cad-icon></button>
    <button class="lang">ENG</button>
    <button aria-label="Network"><cad-icon name="wifi"></cad-icon></button>
    <button aria-label="Volume"><cad-icon name="volume"></cad-icon></button>
    <button aria-label="Battery"><cad-icon name="battery"></cad-icon></button>
    <button class="clock">8:54 PM<br>24/10/14</button>
    <button class="bell" aria-label="Notifications"><cad-icon name="bell"></cad-icon></button>
  </div>`,
(host, root) => {
    const running = { files: "run", edge: "run", sw: "run active" };
    root.querySelector(".apps").innerHTML = ["win", "whatsapp", "rocket", "files", "store", "perf", "edge", "sw", "linkedin", "chip", "hexring", "telegram"]
        .map(n => `<button class="${running[n] || ""}" aria-label="${n}"><cad-icon name="${n}"></cad-icon>${n === "linkedin" ? "<b>1</b>" : ""}</button>`).join("");
});

// translucent mark lying over the bottom of the window
define("site-mark", /*html*/ `
  <style>
    :host { position: absolute; left: 50%; bottom: 22px; width: 232px; transform: translateX(-50%); opacity: .45; color: #c8c8c8; pointer-events: none; font: bold 37px/38px "Liberation Sans", sans-serif; text-align: center; }
    svg { display: block; width: 230px; height: 66px; margin: 0 auto; }
  </style>
  <svg viewBox="0 0 230 66" fill="none" stroke="currentColor" stroke-width="11" stroke-linecap="round">
    <path d="M22 25A17 17 0 1 0 39 46M39 12V51H192M61 38A16 16 0 1 1 92 38A16 16 0 1 1 61 38M117 49V35M139 49V34M154 48L157 31M171 48L174 29M192 41A16 16 0 1 1 224 41A16 16 0 1 1 192 41"/>
    <path d="M70 5H71M85 5H86M115 17H116M130 17H131" stroke-width="8" opacity=".3"/>
  </svg>
  <span>mostaql.com</span>`);

define("cad-app", /*html*/ `
  <style>
    :host { display: flex; flex-direction: column; position: relative; height: 100vh; }
    main { flex: 1; display: flex; position: relative; min-height: 0; }
    .left { display: flex; padding-top: 28px; }
    command-tabs { position: absolute; left: 0; top: 0; z-index: 2; }
  </style>
  <title-bar></title-bar>
  <command-ribbon></command-ribbon>
  <main>
    <div class="left"><feature-tree></feature-tree></div>
    <model-view></model-view>
    <command-tabs></command-tabs>
  </main>
  <study-tabs></study-tabs>
  <status-bar></status-bar>
  <task-bar></task-bar>
  <site-mark></site-mark>`);
</script>
</body>
</html>
